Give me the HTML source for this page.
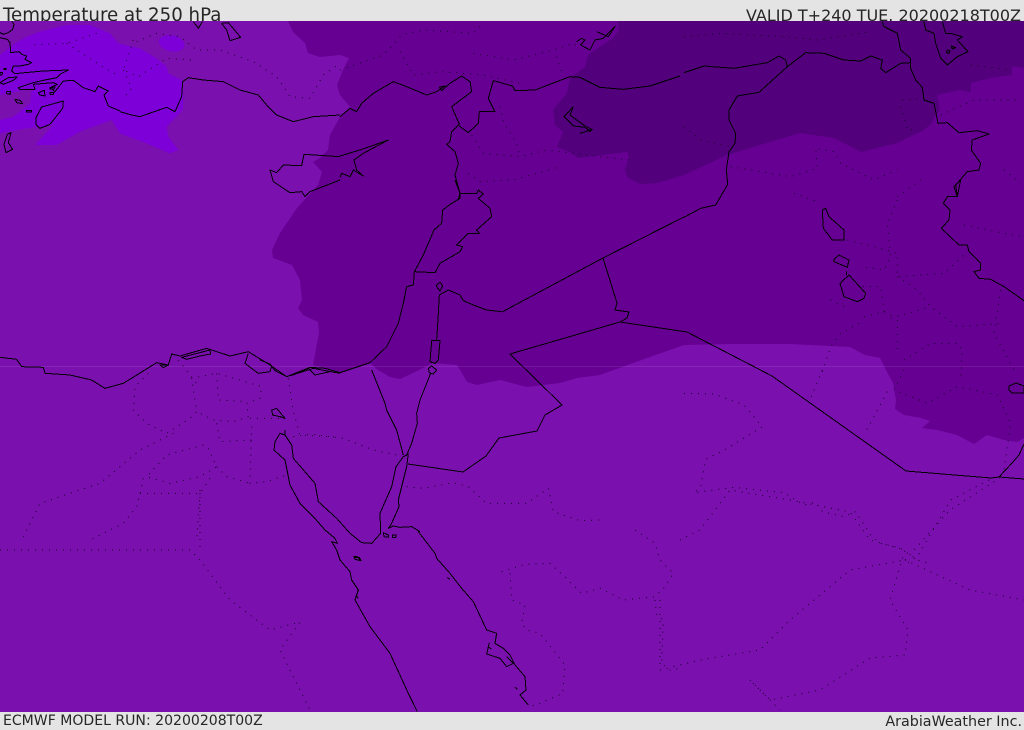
<!DOCTYPE html>
<html><head><meta charset="utf-8"><title>Temperature at 250 hPa</title>
<style>
html,body{margin:0;padding:0;background:#e4e4e4;width:1024px;height:729px;overflow:hidden}
.t{position:absolute;font-family:"DejaVu Sans","Liberation Sans",sans-serif;color:#262626;white-space:nowrap;line-height:1}
svg{position:absolute;left:0;top:0}
path{vector-effect:non-scaling-stroke}
.c path{fill:none;stroke:#000;stroke-width:1;stroke-linejoin:round}
.d path{fill:none;stroke:#1a0028;stroke-width:1;stroke-dasharray:1 6}
</style></head><body>
<div class="t" style="left:3px;top:7px;font-size:18.2px">Temperature at 250 hPa</div>
<div class="t" style="right:3px;top:8px;font-size:16px">VALID T+240 TUE. 20200218T00Z</div>
<div class="t" style="left:3px;top:714px;font-size:14.05px">ECMWF MODEL RUN: 20200208T00Z</div>
<div class="t" style="right:2px;top:715px;font-size:14.3px">ArabiaWeather Inc.</div>
<svg width="1024" height="729" viewBox="0 0 1024 729">
<defs><clipPath id="m"><rect x="0" y="21" width="1024" height="691"/></clipPath></defs>
<g clip-path="url(#m)">
<rect x="0" y="21" width="1024" height="691" fill="#7a10ae"/>
<g transform="scale(.33333)" fill="#7d00d9">
<path d="M0,165 L45,130 L80,110 L120,95 L200,75 L270,75 L330,100 L355,130 L420,145 L470,175 L500,200 L505,220 L545,240 L550,290 L548,330 L500,380 L505,410 L535,450 L510,460 L440,430 L360,400 L335,360 L240,395 L170,435 L105,435 L160,375 L80,385 L0,400 L0,360 L40,350 L90,310 L95,265 L0,285Z"/>
<ellipse cx="515" cy="130" rx="39" ry="24" transform="rotate(12 515 130)"/>
</g>
<path fill="#660092" d="M288,21 L293,32 L305,43 L308,53 L320,57 L340,55 L349,58 L343,70 L337,85 L340,95 L350,107 L340,117 L330,135 L328,150 L320,158 L313,162 L322,172 L318,185 L297,208 L280,233 L272,250 L273,258 L292,265 L300,280 L302,300 L298,308 L303,315 L318,322 L319,333 L313,365 L340,373 L370,363 L378,370 L390,377 L400,379 L413,373 L423,368 L433,363 L457,365 L460,370 L467,382 L477,385 L500,380 L527,387 L560,383 L577,378 L600,375 L650,357 L684,345 L730,344 L790,344 L850,347 L865,355 L880,358 L886,370 L893,383 L896,400 L895,409 L904,415 L921,418 L930,421 L922,428 L937,430 L957,435 L974,444 L987,435 L1004,440 L1017,442 L1024,438 L1024,21Z"/>
<path fill="#52007c" d="M618,21 L619,30 L613,38 L588,55 L585,67 L570,78 L567,93 L553,110 L555,125 L563,132 L557,147 L570,152 L578,158 L627,152 L629,157 L625,170 L627,177 L640,184 L657,183 L684,175 L727,155 L800,133 L834,138 L861,152 L897,143 L924,130 L932,123 L934,117 L940,110 L937,95 L959,90 L971,92 L971,83 L991,78 L1012,75 L1012,66 L1024,68 L1024,21Z"/>
<rect x="0" y="366" width="1024" height="1" fill="#fff" opacity=".09"/>

<g class="d">
<g transform="scale(.33333)"><path d="M410,125 L470,100 L540,110 L590,150 L660,150 L760,185 L830,230 L870,290 L930,295 L970,225 L1020,190 M400,120 L380,180 L370,210 L415,230 L500,175 L580,180 M290,100 L200,130 L90,135 M200,130 L300,195 L350,225 M370,210 L395,265 L370,295"/></g>
<g transform="translate(340,0) scale(.33333)"><path d="M0,210 L130,165 L185,105 L250,90 L400,100 L430,70 M180,155 L220,225 L300,215 L430,225 L540,250 M400,160 L520,180 L640,150 L700,130 L720,145 M650,170 L665,215 M395,405 L430,460 L540,470 L620,450 L780,470 L870,480 M385,520 L420,545 L520,540 L660,500 M480,320 L490,365 L530,430 L540,470"/></g>
<g transform="translate(684,0) scale(.33333)"><path d="M0,110 L110,100 L300,110 L400,120 L560,95 M655,300 L720,295 M650,320 L660,350 L670,390 L700,388 M770,345 L870,300 L1000,300 M0,380 L50,420 L140,440 M140,500 L320,530 L400,505 L395,445 L450,455 L470,490 L570,540 L640,510 M860,195 L980,210 M960,510 L1010,550"/></g>
<g transform="translate(684,180) scale(.33333)"><path d="M330,40 L400,65 M490,180 L570,200 L640,220 L640,290 L780,280 L840,225 M640,60 L610,130 L620,230 L600,270 L530,260 M840,135 L960,160 L1020,170 M640,50 L710,0 M640,290 L700,330 L740,380 L820,440 L960,430 M620,415 L740,380 M540,410 L600,395 L630,410 M600,395 L590,320 L520,320 M480,380 L440,360 M525,430 L470,460 L440,500 L410,590 M640,420 L640,510 M660,540 L740,490 L820,490 L835,510 L830,600 M950,330 L930,460 L990,570"/></g>
<g transform="translate(684,370) scale(.33333)"><path d="M415,0 L380,85 M610,65 L540,195 M660,0 L630,60 L730,100 L820,50 L870,60 L940,75 L980,160 L960,300 M0,70 L90,72 L180,105 L235,170 L130,235 L65,268 L50,350 L30,368 L150,352 L300,368 L360,405 L395,397 L415,425 L480,440 L515,425 L560,495 L590,520 L650,535 L700,570 L735,580 M915,330 L800,390 L700,560 L660,585"/></g>
<g transform="translate(0,340) scale(.33333)"><path d="M445,100 L405,140 L400,210 L440,250 L500,280 L570,235 L590,215 L575,115 L650,100 L720,120 L785,140 L780,175 L740,190 L745,230 L700,245 L640,240 L590,215 M650,100 L655,180 L740,185 M650,250 L660,305 L755,300 M520,280 L420,330 L300,430 L120,490 L70,590 M755,260 L750,430 L800,425 L860,405 M610,315 L500,345 L440,410 L510,430 L600,410 L650,380 L620,315 M650,380 L680,410 L750,430 M420,460 L600,460 L640,400 M430,415 L420,460 L410,500 L370,550 L270,600 M600,460 L590,600 M865,115 L880,215 L900,285 L1020,292 M750,235 L850,235 M535,60 L590,130"/></g>
<path d="M0,550 L190,550 L200,560 L230,600 L270,630 L300,622 L280,650 L310,710 M200,490 L200,550"/>
<g transform="translate(260,370) scale(.33333)"><path d="M100,200 L150,192 L250,205 L340,240 L425,258 M440,350 L490,355 L580,338 L625,350 L680,400 L800,400 L865,355 L880,425 L960,452 L1020,450"/></g>
<g transform="translate(340,530) scale(.33333)"><path d="M485,125 L555,103 L630,100 L700,165 L725,190 L780,175 L850,210 L945,200 L975,170 L1000,130 L960,90 L945,40 L885,0 M510,130 L515,210 L555,225 L545,280 L560,300 L600,310 L675,405 L668,490 L600,520 L570,530 M945,210 L950,255 L970,270 L965,400 L990,420 L1020,415"/></g>
<path d="M680,540 L700,530 L730,490 L790,500 L850,512 L870,540 L905,550 L890,600 L908,630 L905,655 L870,658 L820,690 L770,700 L750,680 M660,600 L660,670 L700,660 L760,650 L790,620 L850,570 L905,560 M905,560 L970,590 L1024,600 M905,560 L950,510 L1000,478 M750,680 L780,710"/>
</g>

<g class="c" shape-rendering="crispEdges">
<g transform="translate(0,21) scale(.33333)">
<path d="M35,0 L42,10 L38,25 L25,35 L10,40 L0,35 M0,50 L22,55 L30,65 L32,95 L58,92 L65,100 L80,105 L75,115 L95,125 L85,130 L60,135 L40,135 L35,150 L45,158 L75,155 L130,150 L205,147 L180,160 L170,170 L130,178 L100,185 L70,195 L55,200 L60,205 L105,205 L100,190 L160,185 L172,190 L150,200 L165,212 L190,180 L220,178 L250,200 L285,212 L295,195 L325,210 L312,222 L325,255 L360,270"/>
<path d="M0,185 L25,170 L52,168 L40,178 L10,190Z M20,212 L32,212 L30,220 L20,218Z M45,235 L60,238 L68,248 L50,245Z M80,268 L95,268 L95,273 L80,273Z M115,215 L133,208 L135,225 L120,222Z M150,200 L165,198 L162,204 L150,204Z M150,214 L162,214 L160,220 L150,220Z M0,155 L8,155 L6,162 L0,162Z M12,142 L18,142 L18,146 L12,146Z"/>
<path d="M108,290 L125,258 L190,240 L188,262 L150,310 L120,322 L108,310Z"/>
<path d="M33,335 L25,365 L38,385 L18,395 L12,370 L22,340Z"/>
</g>
<g transform="scale(.33333)">
<path d="M360,335 L395,345 L420,350 L500,322 L525,335 L545,290 L548,245 L565,233 L610,240 L670,245 L720,270 L775,285 L800,315 L830,345 L880,365 L940,350 L1020,345"/>
<path d="M580,65 L595,85 L607,65 M665,70 L685,68 L722,112 L690,122 L680,90Z"/>
<path d="M1020,470 L912,463 L905,497 L850,495 L830,518 L810,510 L820,545 L870,578 L905,575 L915,590 L930,575 L1020,540"/>
</g>
<g transform="translate(340,0) scale(.33333)">
<path d="M0,350 L30,325 L50,335 L65,310 L100,280 L160,245 L195,258 L260,285 L290,275 L305,265 L315,258 L298,262 L305,272 L330,250 L365,228 L390,245 L395,275 L335,320 L358,372 L335,395 L330,425 L320,433 L345,455 L355,490 L345,525 L360,580 L355,600"/>
<path d="M358,378 L385,398 L415,370 L418,335 L465,335 L445,295 L460,242 L518,258 L525,272 L585,270 L690,230 L720,232 L780,262 L850,268 L930,258 L1020,228"/>
<path d="M0,468 L60,450 L145,420 L70,460 L42,480 L50,510 L70,528 L40,510 L30,530 L5,520 L0,532"/>
<path d="M700,320 L672,350 L700,378 L735,382 L750,395 L755,388 L735,378 L690,345 L700,320 M720,400 L758,388"/>
<path d="M710,125 L725,115 L735,120 L722,135 L750,150 L765,120 L790,115 L825,80 L805,110 L770,95"/>
</g>
<g transform="translate(684,0) scale(.33333)">
<path d="M0,218 L60,198 L150,205 L250,188 L285,168 L305,180 L310,200 L365,158 L420,160 L480,180 L530,183 L560,168 L595,180 L590,205 L605,218 L650,190 L678,188"/>
<path d="M310,200 L225,277 L160,288 L135,330 L135,360 L155,400 L153,430 L135,455 L127,510 L130,540"/>
<path d="M595,65 L600,80 L640,100 L650,150 L680,175 L680,205 L695,240 L715,262 L720,300 L750,310 L762,370 L790,368 L825,398 L880,392 L915,402 L865,420 L862,450 L890,490 L885,510 L850,515 L815,555 L820,590 L830,540"/>
<path d="M720,65 L725,90 L750,100 L755,130 L770,175 L790,195 L820,170 L852,155 L820,120 L835,110 L800,100 L785,100 L775,65"/>
<path d="M790,150 L798,152 L795,160 L788,158Z M802,138 L815,143 L805,147Z"/>
</g>
<g transform="translate(684,180) scale(.33333)">
<path d="M830,0 L810,20 L820,50 L790,50 L778,70 L798,90 L795,120 L772,145 L825,195 L850,195 L855,215 L890,250 L890,270 L870,275 L885,295 L920,298 L960,320 L1020,362"/>
<path d="M415,90 L425,85 L435,110 L480,150 L480,180 L445,180 L418,145Z M450,238 L465,225 L495,240 L490,262 L450,245Z M468,310 L495,285 L545,340 L540,355 L520,365 L480,350Z M487,275 L487,285"/>
<path d="M130,0 L130,15 L95,75 L50,85 L0,112"/>
</g>
<path d="M684,217 L603,258 L502,312 M603,258 L617,303 L615,310 L629,312 L627,318 L620,322 L510,354 L562,405 L545,415 L537,431 L499,438 L486,456 L463,472 L408,464 M620,322 L687,332 L772,376 L906,471 L991,478 L999,477 L1024,479 M999,477 L1012,463 L1019,455 L1024,444"/>
<path d="M1009,386 L1016,383 L1024,386 L1024,393 L1012,393 L1009,390Z"/>
<g transform="translate(260,180) scale(.33333)">
<path d="M585,0 L600,40 L600,55 L575,70 L548,90 L545,130 L522,150 L490,225 L463,275 L460,315 L440,320 L430,370 L415,430 L380,500 L330,548 L240,578 L195,565 L150,562 L80,590 L45,572 L30,552 L0,540"/>
<path d="M600,40 L650,40 L655,30 L670,42 L655,55 L690,85 L695,110 L650,150 L658,160 L625,160 L590,195 L608,200 L600,215 L540,250 L525,278 L463,275"/>
<path d="M530,315 L540,307 L548,318 L540,333 L530,320Z"/>
<path d="M538,345 L535,400 L530,480 M538,345 L565,330 L600,345 L610,362 L640,375 L680,390 L725,395"/>
<path d="M515,482 L540,482 L535,540 L525,550 L510,545Z M505,565 L515,558 L530,570 L520,582 L508,578Z"/>
</g>
<g transform="translate(260,370) scale(.33333)">
<path d="M512,10 L480,90 L470,130 L472,160 L455,220 L440,255 L430,260 L408,290 L395,350 L360,430 L362,490 L335,520 L305,518 L270,490 L230,445 L175,395 L165,340 L100,265 L95,225 L75,195 L75,180 M75,195 L60,190 L45,215 L42,240 L75,270 L85,320 L90,345 L120,400 L160,440 L195,480 L225,505 L232,520 L215,515 L230,540 L240,570"/>
<path d="M445,250 L440,290 L415,390 L417,410 L395,460 L385,475 L400,468 L420,472 L455,470 L480,485"/>
<path d="M335,0 L375,100 L380,120 L410,180 L430,255"/>
<path d="M370,488 L385,495 L385,502 L372,500Z M398,495 L408,495 L408,502 L398,502Z M283,562 L298,562 L303,572 L285,568Z M35,120 L50,115 L75,145 L60,140 L38,135Z"/>
</g>
<g transform="translate(0,340) scale(.33333)">
<path d="M0,52 L50,58 L65,80 L130,82 L135,100 L210,105 L275,120 L315,145 L370,130 L470,68 L505,75 L515,42 L540,48 L620,25 L690,48 L745,35 L810,75 L860,110 L940,85 L1020,100"/>
<path d="M545,52 L630,30 L632,42 L600,48 L560,58Z M480,75 L505,75 L490,83Z M745,40 L735,70 L775,100 L810,95 L815,78"/>
<path d="M880,105 L925,85 L945,105 L990,95"/>
</g>
<g transform="translate(340,530) scale(.33333)">
<path d="M0,90 L30,125 L35,150 L55,180 L45,210 L90,290 L150,370 L205,490 L232,545"/>
<path d="M235,5 L285,70 L290,85 L330,130 L365,175 L400,215 L440,300 L470,310 L465,340 L490,355 L510,375 L525,405 L555,440 L558,480 L540,495 L565,525"/>
<path d="M448,338 L440,372 L480,385 L500,410 L520,400 L500,380 M445,350 L455,358 M42,80 L52,80 L62,92 L45,88Z M322,142 L330,148 M525,472 L533,478 M48,195 L55,205"/>
</g>
</g>
</g>
</svg>
</body></html>
